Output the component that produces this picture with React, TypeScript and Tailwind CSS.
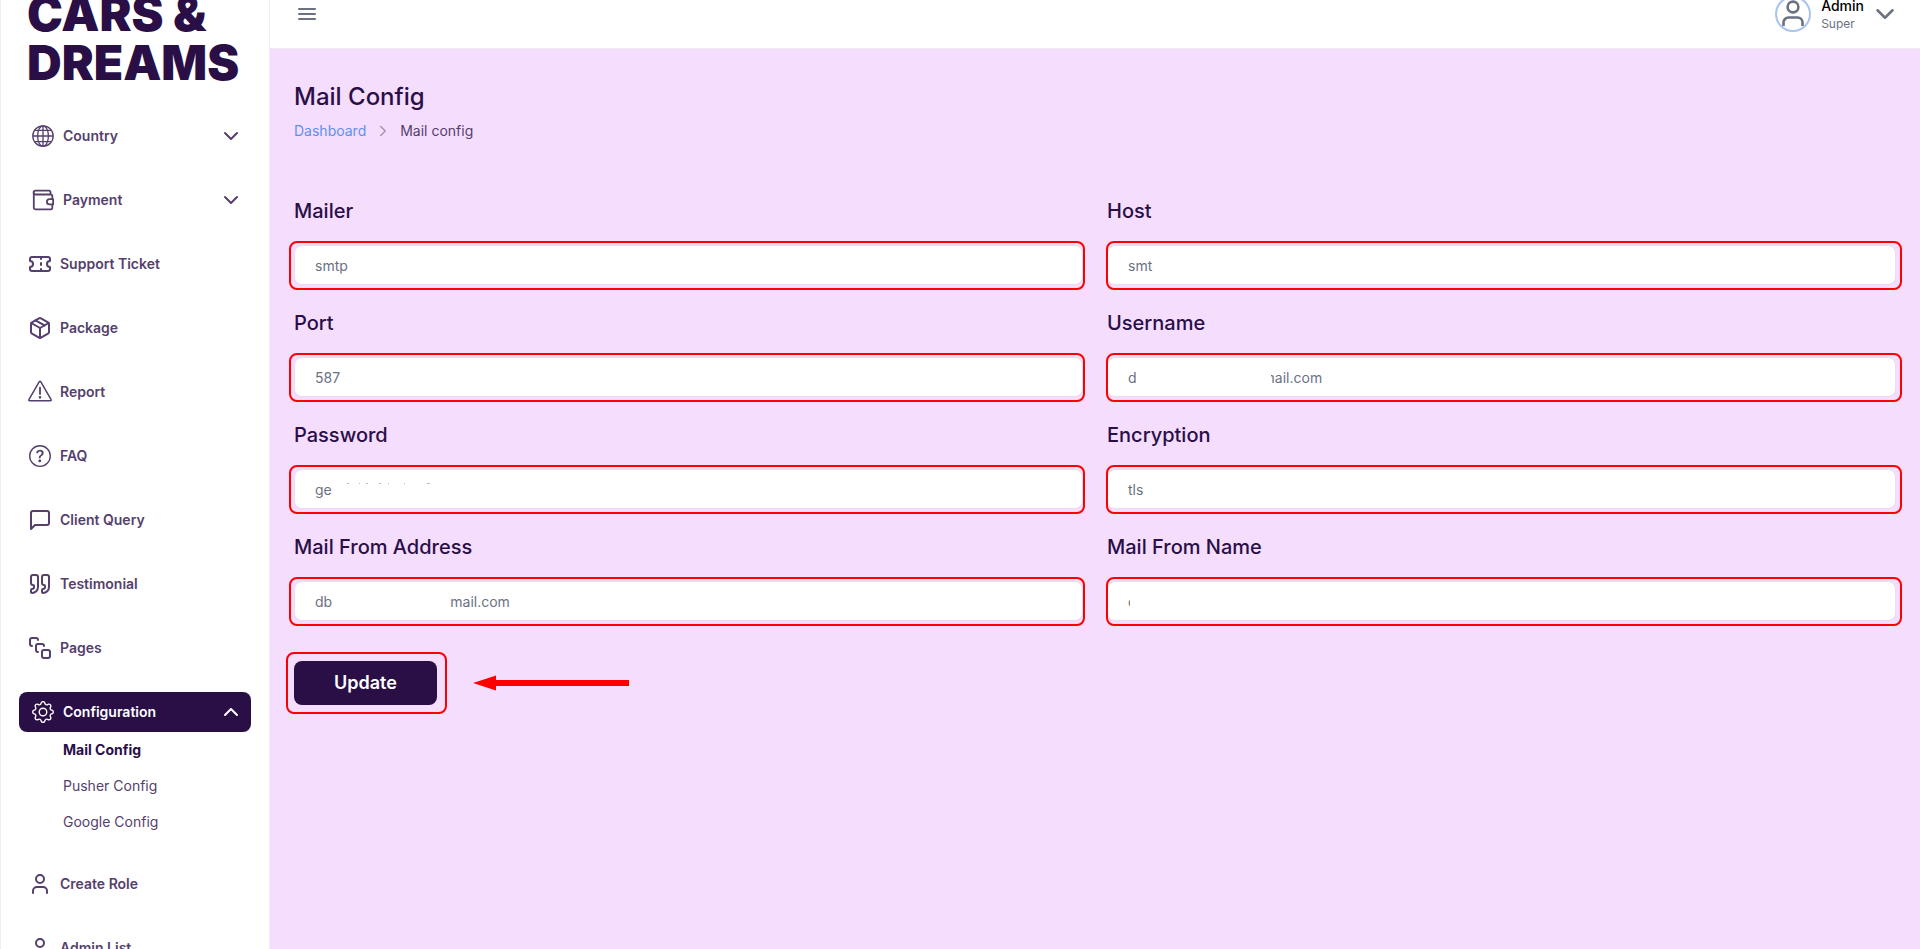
import React, { useState } from 'react';
import { ChevronDown, ChevronRight, ChevronUp, Package, Quote, SquareStack, Ticket, User } from 'lucide-react';
import { BsGear, BsQuestionCircle } from 'react-icons/bs';
import { FiMessageSquare } from 'react-icons/fi';

const GlobeIcon: React.FC = () => (
  <svg className="h-[22px] w-[22px]" viewBox="0 0 22 22" fill="none" stroke="currentColor" strokeWidth={1.3}>
    <circle cx="11" cy="11" r="10.2" />
    <ellipse cx="11" cy="11" rx="5.4" ry="10.2" />
    <path d="M11 .8v20.4M.8 11h20.4M2.6 5.4h16.8M2.6 16.6h16.8" />
  </svg>
);

const WalletIcon: React.FC = () => (
  <svg className="h-[22px] w-[22px]" viewBox="0 0 22 22" fill="none" stroke="currentColor" strokeWidth={1.8} strokeLinejoin="round">
    <path d="M18.500 5.500V3a1.300 1.300 0 0 0-1.300-1.300H3.500A1.800 1.800 0 0 0 3.500 5.500H19a1.300 1.300 0 0 1 1.300 1.300v3.500" />
    <path d="M1.800 3.500V18.500a1.800 1.800 0 0 0 1.800 1.800H19a1.300 1.300 0 0 0 1.300-1.300v-3.500" />
    <path d="M21.100 10.200H17.500a2.600 2.600 0 0 0 0 5.200h3.600Z" />
  </svg>
);

const WarningIcon: React.FC = () => (
  <svg className="h-6 w-6" viewBox="0 0 24 24" fill="none" stroke="currentColor" strokeWidth={1.5} strokeLinecap="round" strokeLinejoin="round">
    <path d="M11.3 1.7.9 19.6c-.3.6.1 1.2.7 1.2h20.8c.6 0 1-.6.7-1.2L12.7 1.7c-.3-.6-1.1-.6-1.4 0Z" />
    <path d="M12 7.700v6.400" strokeWidth={1.8} />
    <circle cx="12" cy="17.300" r=".6" fill="currentColor" />
  </svg>
);

interface NavItem {
  label: string;
  icon: React.ReactNode;
  children?: string[];
}

const navItems: NavItem[] = [
  { label: 'Country', icon: <GlobeIcon />, children: [] },
  { label: 'Payment', icon: <WalletIcon />, children: [] },
  { label: 'Support Ticket', icon: <Ticket size={24} /> },
  { label: 'Package', icon: <Package size={24} /> },
  { label: 'Report', icon: <WarningIcon /> },
  { label: 'FAQ', icon: <BsQuestionCircle size={22} /> },
  { label: 'Client Query', icon: <FiMessageSquare size={24} /> },
  { label: 'Testimonial', icon: <Quote size={24} /> },
  { label: 'Pages', icon: <SquareStack size={24} /> },
  { label: 'Configuration', icon: <BsGear size={22} />, children: ['Mail Config', 'Pusher Config', 'Google Config'] },
  { label: 'Create Role', icon: <User size={24} /> },
  { label: 'Admin List', icon: <User size={24} /> },
];

const SidebarItem: React.FC<{ item: NavItem }> = ({ item }) => {
  const [isOpen, setIsOpen] = useState(item.label === 'Configuration');
  const icon = <span className="flex h-6 w-6 shrink-0 items-center justify-center">{item.icon}</span>;

  if (!item.children) {
    return (
      <a href="#" className="flex h-10 items-center gap-2 pl-[9px] text-sm font-semibold text-[#553f6c]">
        {icon}
        {item.label}
      </a>
    );
  }

  return (
    <div>
      <button
        type="button"
        onClick={() => setIsOpen(!isOpen)}
        className={`flex h-10 w-full items-center gap-2 rounded-lg pl-3 pr-2 text-left text-sm font-semibold ${isOpen ? 'bg-[#2a0f47] text-white' : 'text-[#553f6c]'}`}
      >
        {icon}
        <span className="flex-1">{item.label}</span>
        {isOpen ? <ChevronUp size={24} /> : <ChevronDown size={24} />}
      </button>
      {isOpen && (
        <ul className="pl-11 text-sm leading-9 text-[#553f6c]">
          {item.children.map((c) => (
            <li key={c}>
              <a href="#" className={c === 'Mail Config' ? 'font-bold text-[#2a0f47]' : ''}>{c}</a>
            </li>
          ))}
        </ul>
      )}
    </div>
  );
};

const Sidebar: React.FC = () => (
  <aside className="w-[270px] shrink-0 overflow-hidden border-x border-[#eeeef2] bg-white px-[18px]">
    <div className="-mt-[11px] pl-2 text-[48px] leading-[49px] font-black text-[#2a0f47]">
      CARS &amp;<br />DREAMS
    </div>
    <nav className="mt-[29px] flex flex-col gap-6">
      {navItems.map((item) => <SidebarItem key={item.label} item={item} />)}
    </nav>
  </aside>
);

const Header: React.FC = () => (
  <header className="flex h-[49px] shrink-0 items-center justify-between border-b border-[#eeeef2] bg-white pr-5 pb-5 pl-7">
    <button type="button" aria-label="Toggle menu" className="flex w-[18px] flex-col gap-[3px]">
      <span className="h-0.5 rounded bg-gray-500" />
      <span className="h-0.5 rounded bg-gray-500" />
      <span className="h-0.5 rounded bg-gray-500" />
    </button>
    <button type="button" className="flex items-center text-left">
      <span className="flex h-9 w-9 items-center justify-center rounded-full border-2 border-[#a9c3f3] text-gray-500">
        <svg className="h-8 w-8" viewBox="0 0 32 32" fill="none" stroke="currentColor" strokeWidth={2.6}>
          <circle cx="16" cy="9" r="5.4" />
          <path d="M6.5 28v-3.5a5 5 0 0 1 5-5h9a5 5 0 0 1 5 5V28" />
        </svg>
      </span>
      <span className="ml-2.5 flex flex-col">
        <span className="text-sm font-medium text-black">Admin</span>
        <span className="text-xs text-gray-500">Super</span>
      </span>
      <ChevronDown size={30} className="ml-1.5 text-gray-500" />
    </button>
  </header>
);

interface Field {
  id: string;
  label: string;
  value: string;
  cover?: React.ReactNode;
}

const blank = '\u00a0'.repeat(30);

const fields: Field[] = [
  { id: 'mailer', label: 'Mailer', value: 'smtp' },
  { id: 'host', label: 'Host', value: 'smt' },
  { id: 'port', label: 'Port', value: '587' },
  {
    id: 'username', label: 'Username', value: `d${blank}\u00a0\u00a0mail.com`,
    cover: <span className="absolute top-2 left-[148px] h-6 w-4 bg-white" />,
  },
  {
    id: 'password', label: 'Password', value: 'ge',
    cover: (
      <svg className="absolute top-[14px] left-[50px] h-0.5 w-24" viewBox="0 0 96 2" stroke="#b6bac2">
        <path d="M3 .5h2M15 .5h1M22 .5h2M35 .5h2M44 .5h1M60 .5h1M83 .5h3" strokeWidth={1} />
      </svg>
    ),
  },
  { id: 'encryption', label: 'Encryption', value: 'tls' },
  { id: 'from-address', label: 'Mail From Address', value: `db${blank}mail.com` },
  {
    id: 'from-name', label: 'Mail From Name', value: 'c',
    cover: <span className="absolute top-2 left-[23px] h-6 w-4 bg-white" />,
  },
];

const FormField: React.FC<{ field: Field; side: 'left' | 'right' }> = ({ field, side }) => (
  <div>
    <label htmlFor={field.id} className="block text-xl font-medium text-[#2a0f47]">{field.label}</label>
    <div className="relative mt-5">
      <input
        id={field.id}
        type="text"
        defaultValue={field.value}
        className="block h-10 w-full rounded-lg border border-[#e9dcf4] bg-white px-5 text-sm text-gray-500 outline-none"
      />
      {field.cover}
      <span className={`pointer-events-none absolute -top-1 -bottom-[5px] rounded-lg border-2 border-[#ff0000] ${side === 'left' ? '-left-[5px] -right-0.5' : '-left-px -right-1.5'}`} />
    </div>
  </div>
);

const App: React.FC = () => (
  <div className="flex h-screen overflow-hidden bg-[#f5ddfd] font-['Inter',sans-serif]">
    <Sidebar />
    <div className="flex min-w-0 flex-1 flex-col">
      <Header />
      <main className="flex-1 px-6 pt-8">
        <h1 className="text-2xl font-medium text-[#2a0f47]">Mail Config</h1>
        <nav aria-label="Breadcrumb" className="mt-2 flex items-center text-sm">
          <a href="#" className="text-[#6090ee]">Dashboard</a>
          <ChevronRight size={18} className="mx-2 text-[#a793b8]" />
          <span className="text-[#553f6c]">Mail config</span>
        </nav>

        <form onSubmit={(e) => e.preventDefault()} className="mt-14">
          <div className="grid grid-cols-2 gap-6">
            {fields.map((f, i) => <FormField key={f.id} field={f} side={i % 2 === 0 ? 'left' : 'right'} />)}
          </div>
          <div className="mt-10 flex items-center gap-9">
            <div className="relative">
              <button type="submit" className="block h-11 w-[143px] rounded-lg bg-[#2a0f47] text-lg font-semibold text-white">Update</button>
              <span className="pointer-events-none absolute -top-[9px] -right-2.5 -bottom-[9px] -left-2 rounded-lg border-2 border-[#ff0000]" />
            </div>
            <svg className="h-4 w-[156px]" viewBox="0 0 156 16" fill="#ff0000">
              <path d="M0 8 23 .5V5h133v6H23v4.500Z" />
            </svg>
          </div>
        </form>
      </main>
    </div>
  </div>
);

export default App;
